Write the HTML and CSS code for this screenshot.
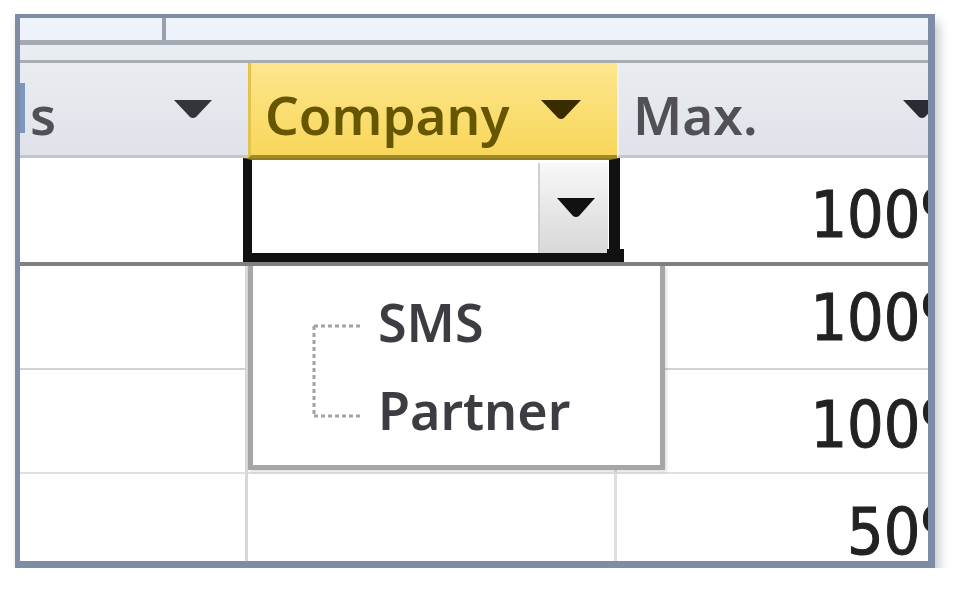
FILE: index.html
```html
<!DOCTYPE html>
<html>
<head>
<meta charset="utf-8">
<link rel="stylesheet" href="styles.css">
</head>
<body>
<div class="frame">
  <div class="strip-top"><span class="strip-div"></span></div>
  <div class="line-a"></div>
  <div class="strip-mid"></div>
  <div class="line-b"></div>
  <div class="grid">
    <div class="hcell hgray">
      <span class="blue-bit"></span>
      <span class="htext">s</span>
      <svg class="harrow" width="38" height="19" viewBox="0 0 38 19"><path d="M0 0 H38 L22 17 Q19 19 16 17 Z" fill="#34343a"/></svg>
    </div>
    <div class="hcell hyellow">
      <span class="htext hco">Company</span>
      <svg class="harrow" width="40" height="20" viewBox="0 0 40 20"><path d="M0 0 H40 L23 18 Q20 20 17 18 Z" fill="#3b2c00"/></svg>
    </div>
    <div class="hcell hgray hmax">
      <span class="htext">Max.</span>
      <svg class="harrow" width="38" height="19" viewBox="0 0 38 19"><path d="M0 0 H38 L22 17 Q19 19 16 17 Z" fill="#2b2b33"/></svg>
    </div>

    <div class="cell r1 c1"></div>
    <div class="cell r1 editor">
      <div class="editor-box">
        <div class="dd-btn">
          <svg width="38" height="20" viewBox="0 0 38 20"><path d="M0 0 H38 L22 18 Q19 20 16 18 Z" fill="#111"/></svg>
        </div>
      </div>
      <span class="handle"></span>
    </div>
    <div class="cell r1 num">100%</div>

    <div class="cell r2 c1"></div>
    <div class="cell r2 c2"></div>
    <div class="cell r2 num">100%</div>

    <div class="cell r3 c1"></div>
    <div class="cell r3 c2"></div>
    <div class="cell r3 num">100%</div>

    <div class="cell r4 c1"></div>
    <div class="cell r4 c2"></div>
    <div class="cell r4 num">50%</div>
  </div>

  <div class="popup">
    <svg class="tree" width="55" height="176" viewBox="0 0 55 176">
      <path d="M4 48 H50 M4 48 V138 M4 138 H50" stroke="#a2a2a2" stroke-width="3" stroke-dasharray="4 3" fill="none"/>
    </svg>
    <div class="items">
      <div class="item">SMS</div>
      <div class="item">Partner</div>
    </div>
  </div>
</div>
</body>
</html>
```
FILE: styles.css
```css
html, body {
  margin: 0;
  padding: 0;
  background: #ffffff;
}

.frame {
  position: relative;
  margin: 14px 0 0 15px;
  width: 908px;
  height: 543px;
  border-style: solid;
  border-color: #7e8da5;
  border-width: 4px 7px 7px 5px;
  box-shadow: 4px 8px 10px rgba(60, 70, 90, 0.3);
  overflow: hidden;
  display: flex;
  flex-direction: column;
  background: #fff;
}

.strip-top {
  height: 22px;
  background: #eef3fa;
  display: flex;
  flex: none;
}
.strip-div {
  width: 4px;
  margin-left: 142px;
  background: #97a0ac;
}
.line-a { height: 5px; background: #a3aab3; flex: none; }
.strip-mid { height: 15px; background: #e9ecf1; flex: none; }
.line-b { height: 3px; background: #a8adb4; flex: none; }

.grid {
  display: grid;
  grid-template-columns: 228px 369px 360px;
  grid-template-rows: 95px 108px 104px 104px 105px;
  flex: none;
}

.hcell {
  box-sizing: border-box;
  display: flex;
  align-items: flex-start;
  padding-top: 15px;
  border-bottom: 3px solid #c3c7cd;
  font-family: "Noto Sans", "Open Sans", sans-serif;
  font-weight: 600;
  font-size: 53px;
  line-height: normal;
}
.hgray {
  background: linear-gradient(#e9ecf1, #dfe2e8);
  color: #505056;
}
.hmax {
  padding-left: 14px;
  border-left: 2px solid #edf0f4;
}
.hyellow {
  background: linear-gradient(#fde68e, #f8d75a);
  border-left: 3px solid #e3c24d;
  border-bottom: 3px solid #a08c2c;
  color: #665600;
  padding-left: 14px;
}
.blue-bit {
  width: 5px;
  height: 50px;
  margin-top: 5px;
  background: #7d97bf;
  margin-right: 5px;
}
.htext { display: block; }
.harrow {
  margin-left: auto;
  margin-right: 36px;
  margin-top: 22px;
  flex: none;
}

.cell {
  box-sizing: border-box;
  background: #fff;
}
.r1 { border-bottom: 4px solid #7f7f7f; }
.r2 { border-bottom: 2px solid #d2d2d2; }
.r3 { border-bottom: 2px solid #e0e0e0; }
.c1 { border-right: 3px solid #d8d8d8; }
.r1.c1 { border-right: none; }
.c2 { border-right: 3px solid #dddddd; }

.num {
  display: flex;
  align-items: flex-end;
  justify-content: flex-end;
  padding: 0 2px 10px 0;
  font-family: "DejaVu Sans Condensed", "DejaVu Sans", sans-serif;
  font-stretch: condensed;
  font-size: 64px;
  line-height: normal;
  color: #222222;
  -webkit-text-stroke: 1px #222222;
}
.r2.num { padding-bottom: 13px; }

.editor {
  position: relative;
  margin-left: -5px;
  margin-right: -3px;
  z-index: 2;
  background: transparent;
}
.editor-box {
  box-sizing: border-box;
  height: 104px;
  border-style: solid;
  border-color: #111;
  border-width: 2px 11px 9px 9px;
  border-top-color: #8f7d1f;
  background: #fff;
  display: flex;
  justify-content: flex-end;
  align-items: flex-start;
  padding: 3px 1px 0 0;
}
.dd-btn {
  width: 70px;
  height: 90px;
  box-sizing: border-box;
  background: linear-gradient(#f8f8f8, #e4e4e4 60%, #d8d8d8);
  border-left: 2px solid #cfcfcf;
  display: flex;
  align-items: center;
  justify-content: center;
  padding-left: 4px;
}
.handle {
  position: absolute;
  right: -4px;
  bottom: 0;
  width: 17px;
  height: 13px;
  background: #111;
}

.popup {
  position: absolute;
  left: 228px;
  top: 248px;
  width: 417px;
  height: 204px;
  box-sizing: border-box;
  background: #fff;
  border: 5px solid #a6a6a6;
  border-top: none;
  box-shadow: 2px 2px 3px rgba(0, 0, 0, 0.12);
  display: flex;
  align-items: flex-start;
  padding: 12px 0 0 57px;
  gap: 13px;
  z-index: 3;
}
.tree { flex: none; }
.items {
  display: flex;
  flex-direction: column;
  font-family: "Noto Sans", "Open Sans", sans-serif;
  font-weight: 600;
  font-size: 52px;
  line-height: 88px;
  color: #3c3c42;
}
.item { height: 88px; }
```
